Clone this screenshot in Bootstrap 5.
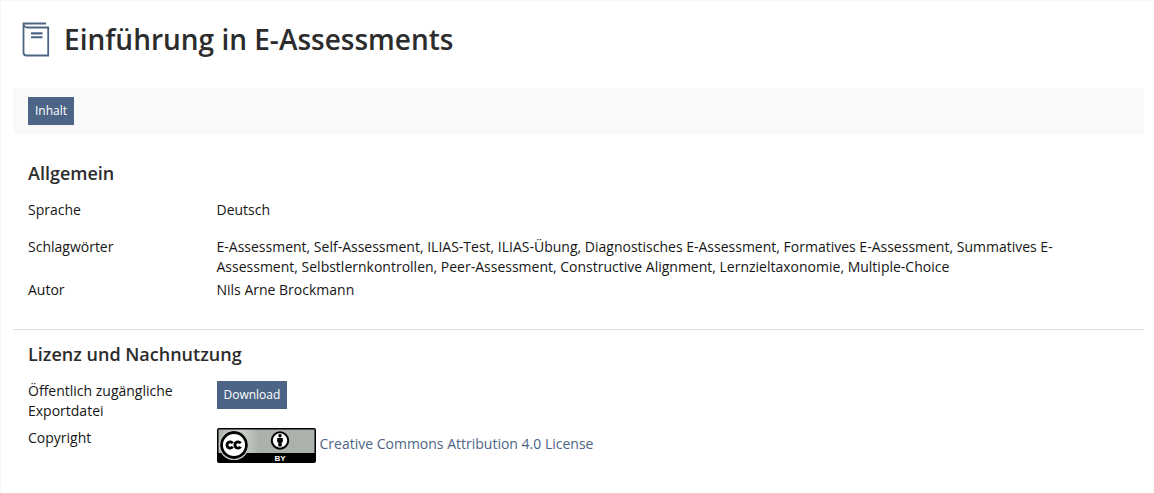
<!DOCTYPE html>
<html lang="de">
<head>
<meta charset="utf-8">
<meta name="viewport" content="width=device-width, initial-scale=1">
<title>Einführung in E-Assessments</title>
<link href="https://cdn.jsdelivr.net/npm/bootstrap@5.3.0/dist/css/bootstrap.min.css" rel="stylesheet">
<style>
body { font-family: "Open Sans", sans-serif; font-size: 14px; line-height: 20px; color: #161616; background: #fff; }
.page { border-top: 1px solid #f7f7f7; border-left: 1px solid #f7f7f7; padding: 0 10px 0 12px; min-height: 100vh; }
.page-head { padding: 20px 8px 31px; gap: 13px; }
.page-head h1 { font-size: 28px; line-height: 36px; font-weight: 600; color: #2c2c2c; }
.page-head svg { margin-bottom: -2px; }
.toolbar-strip { background: #f9f9f9; padding: 9px 15px; }
.btn-ilias { --bs-btn-color: #fff; --bs-btn-bg: #4c6586; --bs-btn-border-color: #4c6586; --bs-btn-hover-color: #fff; --bs-btn-hover-bg: #3a4c65; --bs-btn-hover-border-color: #3a4c65; --bs-btn-border-radius: 0; --bs-btn-font-size: 12px; --bs-btn-line-height: 20px; --bs-btn-padding-x: 6px; --bs-btn-padding-y: 3px; display: block; }
.info-block { padding-top: 27px; padding-bottom: 29px; }
.info-block + .info-block { border-top: 1px solid #ddd; padding-top: 12px; }
.info-block h2 { font-size: 18px; line-height: 24px; font-weight: 600; color: #2c2c2c; padding: 0 15px; margin-bottom: 15px; }
.info-block .row { --bs-gutter-x: 30px; margin-left: 0; margin-right: 0; }
.info-block dt { font-weight: 400; }
.row-loose { margin-bottom: 17px; }
.row-tight { margin-bottom: 3px; }
.row-button { margin-bottom: 7px; }
.license-link { color: #4c6586; text-decoration: none; gap: 4px; }
.license-link span { padding-top: 6px; }
.license-link:hover { text-decoration: underline; }
</style>
</head>
<body>
<main class="page">
  <header class="page-head d-flex align-items-start">
    <svg width="30" height="38" viewBox="0 0 30 38" fill="none" stroke="#4c6586" stroke-width="1.8" aria-hidden="true">
      <path d="M25 2.500H2.500V31.500Q2.500 34.500 5.500 34.500H27.200V6.500H6.500Q3 6.500 2.500 2.500"/>
      <path d="M10 12.400H21.500M10 16.200H21.500" stroke-width="2.100"/>
    </svg>
    <h1 class="mb-0">Einführung in E-Assessments</h1>
  </header>

  <div class="toolbar-strip d-flex">
    <button type="button" class="btn btn-ilias">Inhalt</button>
  </div>

  <section class="info-block">
    <h2>Allgemein</h2>
    <dl class="mb-0">
      <div class="row row-loose">
        <dt class="col-2">Sprache</dt>
        <dd class="col-10 mb-0">Deutsch</dd>
      </div>
      <div class="row row-tight">
        <dt class="col-2">Schlagwörter</dt>
        <dd class="col-10 mb-0">E-Assessment, Self-Assessment, ILIAS-Test, ILIAS-Übung, Diagnostisches E-Assessment, Formatives E-Assessment, Summatives E-Assessment, Selbstlernkontrollen, Peer-Assessment, Constructive Alignment, Lernzieltaxonomie, Multiple-Choice</dd>
      </div>
      <div class="row">
        <dt class="col-2">Autor</dt>
        <dd class="col-10 mb-0">Nils Arne Brockmann</dd>
      </div>
    </dl>
  </section>

  <section class="info-block">
    <h2>Lizenz und Nachnutzung</h2>
    <dl class="mb-0">
      <div class="row row-button">
        <dt class="col-2">Öffentlich zugängliche Exportdatei</dt>
        <dd class="col-10 mb-0"><button type="button" class="btn btn-ilias">Download</button></dd>
      </div>
      <div class="row">
        <dt class="col-2">Copyright</dt>
        <dd class="col-10 mb-0 d-flex">
          <a href="#" class="license-link d-flex align-items-start">
            <svg width="99" height="35" viewBox="0 0 99 35" aria-hidden="true">
              <defs><linearGradient id="shine"><stop offset="0" stop-color="#aab2ab"/><stop offset=".2" stop-color="#d3d8d2"/><stop offset=".42" stop-color="#aab2ab"/></linearGradient></defs>
              <rect width="99" height="35" rx="2"/>
              <path fill="url(#shine)" d="M1.500 1.500H97.500V25H1.500Z"/>
              <circle cx="17" cy="17" r="15" fill="#aab2ab"/>
              <path d="M1.500 25H6L10 30H24L28 25H32V34H1.500Z"/>
              <circle cx="17" cy="17" r="12.500" fill="#fff" stroke="#000" stroke-width="2.800"/>
              <circle cx="17" cy="17" r="14.500" fill="none" stroke="#c4cac3" stroke-width="1.200"/>
              <g fill="none" stroke="#000" stroke-width="2.900">
                <path d="M15.700 15.300A3.100 3.100 0 1 0 15.700 18.700M23.600 15.300A3.100 3.100 0 1 0 23.600 18.700"/>
              </g>
              <circle cx="63" cy="12.500" r="8.200" fill="#fff" stroke="#000" stroke-width="2"/>
              <circle cx="63" cy="7.800" r="1.700"/>
              <path d="M60.200 10H65.800V14.200H64.700V18.500H61.300V14.200H60.200Z"/>
              <text x="63" y="33" text-anchor="middle" fill="#fff" font-family="Liberation Sans, sans-serif" font-size="8" font-weight="700">BY</text>
            </svg>
            <span>Creative Commons Attribution 4.0 License</span>
          </a>
        </dd>
      </div>
    </dl>
  </section>
</main>
<script src="https://cdn.jsdelivr.net/npm/bootstrap@5.3.0/dist/js/bootstrap.bundle.min.js"></script>
</body>
</html>
